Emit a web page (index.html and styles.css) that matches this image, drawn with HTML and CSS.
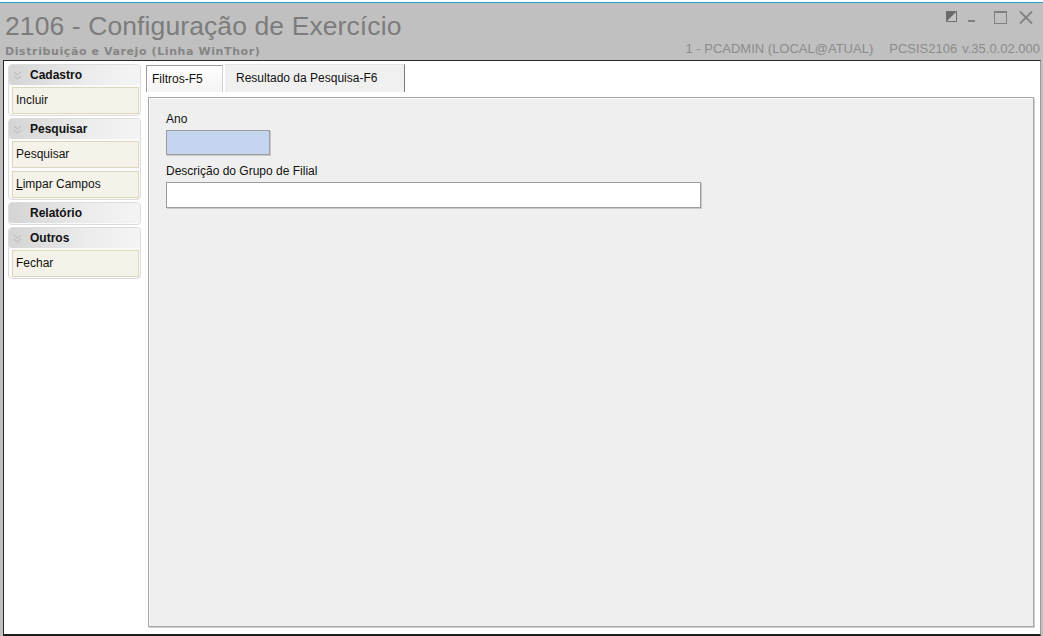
FILE: index.html
```html
<!DOCTYPE html>
<html lang="pt">
<head>
<meta charset="utf-8">
<title>2106 - Configuração de Exercício</title>
<link rel="stylesheet" href="styles.css">
</head>
<body>
<div class="topstrip"></div>
<header class="titlebar">
  <div class="title-left">
    <h1 class="title">2106 - Configuração de Exercício</h1>
    <div class="subtitle">Distribuição e Varejo (Linha WinThor)</div>
  </div>
  <div class="title-right">
    <div class="winbtns">
      <svg class="wb wb-skin" width="11" height="11" viewBox="0 0 11 11"><rect x="0.5" y="0.5" width="10" height="10" fill="#c4c4c4" stroke="#6e6e6e"/><polygon points="1,10 10,1 1,1" fill="#6a6a6a"/></svg>
      <svg class="wb wb-min" width="10" height="12" viewBox="0 0 10 12"><rect x="1" y="9" width="7" height="2" fill="#808080"/></svg>
      <svg class="wb wb-max" width="13" height="13" viewBox="0 0 13 13"><rect x="0.5" y="0.5" width="12" height="12" fill="none" stroke="#808080"/><rect x="0" y="0" width="13" height="2" fill="#808080"/></svg>
      <svg class="wb wb-close" width="14" height="13" viewBox="0 0 14 13"><path d="M1 0.5 L13 12.5 M13 0.5 L1 12.5" stroke="#808080" stroke-width="1.8" fill="none"/></svg>
    </div>
    <div class="info"><span>1 - PCADMIN (LOCAL@ATUAL)</span><span>PCSIS2106</span><span>v.35.0.02.000</span></div>
  </div>
</header>
<main class="frame">
  <nav class="sidebar">
    <section class="group">
      <div class="ghead"><svg class="chev" width="9" height="9" viewBox="0 0 9 9"><path d="M1 1 L4.5 4 L8 1 M1 5 L4.5 8 L8 5" fill="none" stroke="#b4b4b4" stroke-width="1"/></svg>Cadastro</div>
      <div class="gitem">Incluir</div>
    </section>
    <section class="group">
      <div class="ghead"><svg class="chev" width="9" height="9" viewBox="0 0 9 9"><path d="M1 1 L4.5 4 L8 1 M1 5 L4.5 8 L8 5" fill="none" stroke="#b4b4b4" stroke-width="1"/></svg>Pesquisar</div>
      <div class="gitem">Pesquisar</div>
      <div class="gitem"><u>L</u>impar Campos</div>
    </section>
    <section class="group">
      <div class="ghead ghead-plain">Relatório</div>
    </section>
    <section class="group">
      <div class="ghead"><svg class="chev" width="9" height="9" viewBox="0 0 9 9"><path d="M1 1 L4.5 4 L8 1 M1 5 L4.5 8 L8 5" fill="none" stroke="#b4b4b4" stroke-width="1"/></svg>Outros</div>
      <div class="gitem">Fechar</div>
    </section>
  </nav>
  <div class="content">
    <div class="tabs">
      <div class="tab tab-active">Filtros-F5</div>
      <div class="tab tab-other">Resultado da Pesquisa-F6</div>
    </div>
    <div class="panel">
      <label class="lbl">Ano</label>
      <div class="input input-ano"></div>
      <label class="lbl lbl2">Descrição do Grupo de Filial</label>
      <div class="input input-desc"></div>
    </div>
  </div>
</main>
</body>
</html>
```
FILE: styles.css
```css
* { box-sizing: border-box; }
html, body { margin: 0; padding: 0; }
body {
  width: 1043px;
  height: 636px;
  overflow: hidden;
  background: #c0c0c0;
  font-family: "Liberation Sans", Arial, sans-serif;
  font-size: 12px;
  color: #000;
  display: flex;
  flex-direction: column;
}
.topstrip {
  height: 3px;
  background: #fff;
  border-bottom: 1px solid #1fa7c9;
}
.titlebar {
  height: 57px;
  flex: none;
  display: flex;
  justify-content: space-between;
  background: #c0c0c0;
}
.title-left { padding-left: 5px; }
.title {
  margin: 0;
  padding-top: 8px;
  font-weight: normal;
  font-size: 26.5px;
  line-height: 30px;
  color: #7c7c7c;
  letter-spacing: 0.1px;
}
.subtitle {
  margin-top: 4px;
  font-family: "DejaVu Sans", Verdana, sans-serif;
  font-weight: bold;
  font-size: 11px;
  letter-spacing: 0.6px;
  color: #858585;
}
.title-right {
  display: flex;
  flex-direction: column;
  align-items: flex-end;
  padding-right: 3px;
}
.winbtns {
  display: flex;
  align-items: flex-start;
  padding-top: 8px;
  padding-right: 7px;
  height: 38px;
}
.wb { display: block; }
.wb-skin { margin-right: 10px; margin-left: 2px; }
.wb-min { margin-right: 17px; }
.wb-max { margin-right: 12px; }
.info {
  display: flex;
  gap: 16px;
  font-size: 13px;
  line-height: 15px;
  color: #8c8c8c;
}
.info span:last-child { margin-left: -11px; }
.frame {
  flex: 1;
  display: flex;
  background: #fff;
  margin-left: 3px;
  margin-right: 2px;
  border-left: 1px solid #2a2a2a;
  border-right: 1px solid #9a9a9a;
  border-bottom: 2px solid #1e1e1e;
  border-top: 1px solid #2a2a2a;
}
.sidebar {
  width: 137px;
  padding: 3px 0 0 4px;
  display: flex;
  flex-direction: column;
  gap: 2px;
}
.group {
  border: 1px solid #dcdcdc;
  border-radius: 4px;
  padding-bottom: 1px;
  background: #fafafa;
}
.ghead {
  height: 20px;
  line-height: 20px;
  font-weight: bold;
  font-size: 12px;
  color: #111;
  padding-left: 3px;
  border-radius: 3px;
  background: linear-gradient(to right, #d4d4d4, #ececec 60%, #f4f4f4);
  display: flex;
  align-items: center;
}
.ghead-plain { padding-left: 21px; }
.chev {
  display: block;
  margin-right: 8px;
  margin-left: 1px;
}
.gitem {
  margin: 2px 1px 0 3px;
  height: 27px;
  line-height: 25px;
  padding-left: 3px;
  background: #f5f3e9;
  border: 1px solid #ddd8bd;
  font-size: 12px;
  color: #111;
}
.gitem + .gitem { margin-top: 3px; }
.content {
  flex: 1;
  display: flex;
  flex-direction: column;
  padding: 2px 6px 7px 4px;
}
.tabs {
  display: flex;
  align-items: flex-end;
  height: 29px;
  margin-left: 1px;
}
.tab {
  height: 28px;
  line-height: 26px;
  padding: 0 6px;
  font-size: 12px;
  color: #111;
}
.tab-active {
  width: 77px;
  height: 27px;
  padding-left: 5px;
  border: 1px solid #9a9a9a;
  border-right-color: #d0d0d0;
  border-bottom: none;
  background: linear-gradient(#fff, #f4f4f4);
  box-shadow: inset 1px 1px 0 #fff;
}
.tab-other {
  width: 180px;
  margin-left: 2px;
  padding-left: 11px;
  background: #f0f0f0;
  border-right: 1px solid #7a7a7a;
  border-top: 1px solid #e4e4e4;
}
.panel {
  flex: 1;
  margin-top: 5px;
  margin-left: 3px;
  background: #efefef;
  border: 1px solid #a8a8a8;
  box-shadow: 1px 1px 0 #d0d0d0, inset 1px 1px 0 #fafafa;
  padding: 14px 0 0 17px;
  display: flex;
  flex-direction: column;
  align-items: flex-start;
}
.lbl {
  font-size: 12px;
  color: #111;
  line-height: 15px;
}
.lbl2 { margin-top: 9px; }
.input {
  margin-top: 3px;
  border: 1px solid #9c9c9c;
  box-shadow: 1px 1px 0 #c8c8c8;
}
.input-ano {
  width: 104px;
  height: 25px;
  background: #c6d5ef;
}
.input-desc {
  width: 535px;
  height: 26px;
  background: #fff;
}
```
